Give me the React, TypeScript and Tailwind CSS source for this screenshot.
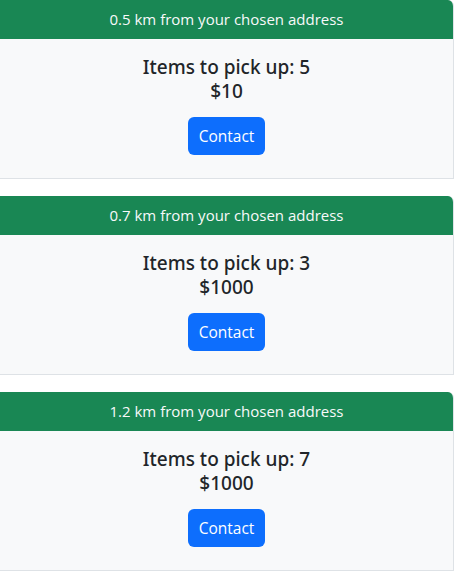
import React from "react";

interface Offer {
  distance: string;
  items: number;
  price: string;
}

const offers: Offer[] = [
  { distance: "0.5", items: 5, price: "$10" },
  { distance: "0.7", items: 3, price: "$1000" },
  { distance: "1.2", items: 7, price: "$1000" },
];

const OfferCard = (props: Offer) => {
  const { distance, items, price } = props;

  return (
    <div className="mb-[17px] overflow-hidden rounded-tr-[6px] border-r border-b border-[#dee2e6] bg-[#f8f9fa]">
      <div className="flex h-[39px] items-center justify-center bg-[#198754] text-[15px] text-[#f8f9fa]">
        {distance} km from your chosen address
      </div>
      <div className="flex h-[139px] flex-col items-center pt-[16px]">
        <div
          className="text-center text-[19px] leading-[24px] font-medium text-[#212529]"
          style={{ fontFamily: '"Noto Sans", "Open Sans", sans-serif' }}
        >
          <div>Items to pick up: {items}</div>
          <div>{price}</div>
        </div>
        <button className="mt-[14px] h-[38px] rounded-[6px] bg-[#0d6efd] px-[11px] text-[15.5px] leading-[24px] text-white">
          Contact
        </button>
      </div>
    </div>
  );
};

export default function App() {
  return (
    <div
      className="min-h-screen w-full bg-white"
      style={{ fontFamily: '"Open Sans", "Noto Sans", sans-serif' }}
    >
      {offers.map((o) => (
        <OfferCard key={o.distance} {...o} />
      ))}
    </div>
  );
}
